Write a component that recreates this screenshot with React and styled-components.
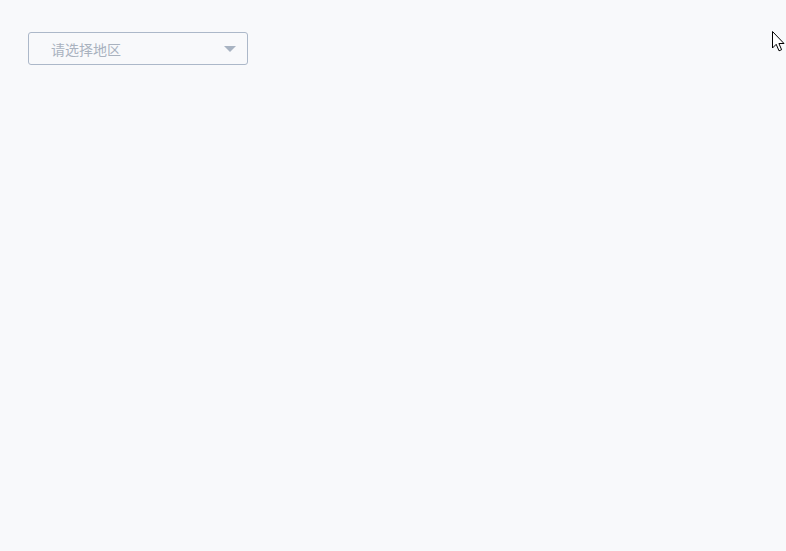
import React from 'react'
import styled, { createGlobalStyle } from 'styled-components'

const GlobalStyle = createGlobalStyle`
  html, body {
    margin: 0;
    padding: 0;
    background: #f8f9fb;
    font-family: "Noto Sans CJK SC", "Liberation Sans", sans-serif;
  }
`

const Page = styled.div`
  position: relative;
  width: 786px;
  height: 551px;
  padding: 32px 0 0 28px;
  box-sizing: border-box;
  background: #f8f9fb;
`

const Select = styled.div`
  width: 220px;
  height: 33px;
  box-sizing: border-box;
  border: 1px solid #acb8c9;
  border-radius: 3px;
  background: #f8f9fb;
  display: flex;
  align-items: center;
  justify-content: space-between;
  padding: 0 11px 0 22px;
  cursor: pointer;
`

const Placeholder = styled.span`
  font-size: 14px;
  color: #a9b2bf;
`

const Arrow = styled.span`
  width: 0;
  height: 0;
  border-left: 6px solid transparent;
  border-right: 6px solid transparent;
  border-top: 6px solid #a8b3c2;
  margin-top: 1px;
`

// mouse pointer captured in the screenshot
const Cursor = styled.svg`
  position: absolute;
  left: 771px;
  top: 30px;
`

export default () => {
  return (
    <Page>
      <GlobalStyle />
      <Select>
        <Placeholder>请选择地区</Placeholder>
        <Arrow />
      </Select>
      <Cursor width="15" height="24" viewBox="0 0 15 24">
        <path
          d="M1.5 1.5 L1.5 18 L5.2 14.3 L8 20.8 L10.6 19.7 L7.9 13.5 L13 13.5 Z"
          fill="#fff"
          stroke="#000"
          strokeWidth="1"
          strokeLinejoin="miter"
        />
      </Cursor>
    </Page>
  )
}
